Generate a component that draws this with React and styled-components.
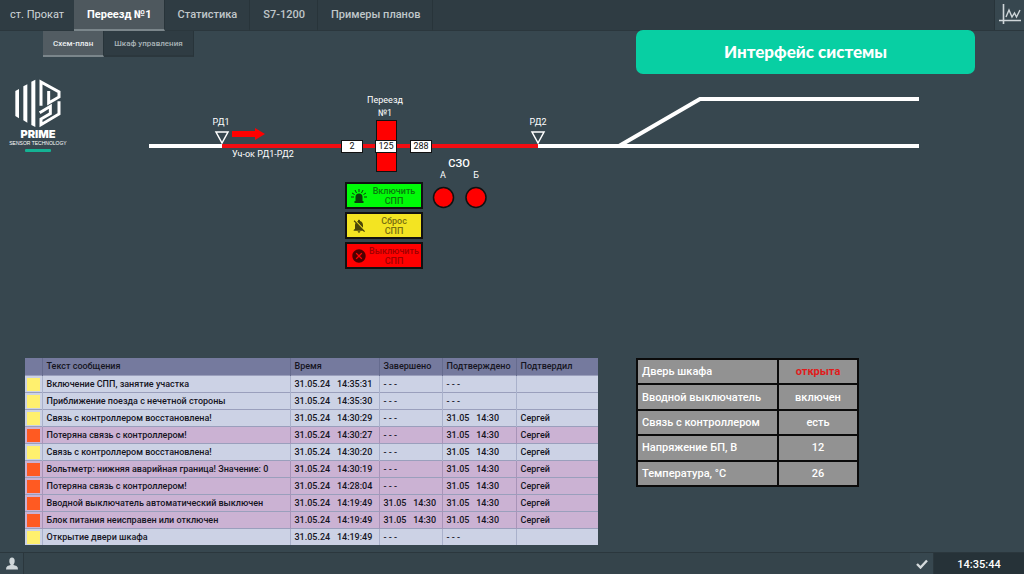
import styled, { createGlobalStyle } from "styled-components";
import { MdNotificationsOff, MdCancel } from "react-icons/md";

const GlobalStyle = createGlobalStyle`
  * {
    box-sizing: border-box;
  }

  body {
    margin: 0;
    background-color: #37474f;
    color: #fff;
    font-family: Roboto, sans-serif;
    font-size: 10px;
  }

  button {
    font-family: inherit;
    border: none;
    padding: 0;
    cursor: pointer;
  }
`;

const Page = styled.div`
  min-height: 100vh;
  display: flex;
  flex-direction: column;
`;

const TopBar = styled.header`
  display: flex;
  height: 31px;
  background-color: #2f3c43;
  border-bottom: 1px solid #2b373d;
`;

const Nav = styled.nav`
  display: flex;
  flex: 1;
`;

const Station = styled.div`
  width: 74px;
  padding-left: 10px;
  line-height: 29px;
  font-size: 11px;
  color: #cfd6d9;
`;

const NavTab = styled.button`
  height: 31px;
  padding: 0 12px 0 13px;
  font-size: 11px;
  font-weight: ${({ $active }) => ($active ? 700 : 500)};
  color: ${({ $active }) => ($active ? "#fff" : "#c0c7ca")};
  background-color: ${({ $active }) => ($active ? "#4e585e" : "transparent")};
  border-right: 1px solid #28343a;
  border-bottom: 2px solid ${({ $active }) => ($active ? "#7b868b" : "transparent")};
`;

const ChartButton = styled.button`
  width: 30px;
  height: 30px;
  background-color: #37474f;
  border-left: 1px solid #28343a;
`;

const SubNav = styled.nav`
  display: flex;
  align-items: flex-start;
  height: 29px;
  padding-left: 43px;
`;

const SubTab = styled.button`
  height: 26px;
  padding: 0 10px;
  font-size: 8px;
  font-weight: 500;
  color: ${({ $active }) => ($active ? "#eceff1" : "#aab4b8")};
  background-color: ${({ $active }) => ($active ? "#525c62" : "#2f3c43")};
  border-right: 1px solid #28343a;
  border-bottom: 2px solid ${({ $active }) => ($active ? "#7b868b" : "#2b373d")};
`;

const Banner = styled.h1`
  position: absolute;
  top: 30px;
  right: 49px;
  width: 339px;
  margin: 0;
  border-radius: 7px;
  background-color: #08cfa3;
  font-family: Lato, "Open Sans", sans-serif;
  font-size: 17px;
  font-weight: 900;
  line-height: 44px;
  text-align: center;
`;

const Workspace = styled.main`
  flex: 1;
`;

const Overview = styled.section`
  display: flex;
`;

const Brand = styled.div`
  width: 80px;
  padding: 19px 4px 0 0;
  display: flex;
  flex-direction: column;
  align-items: center;
`;

const BrandName = styled.div`
  font-family: Inter, sans-serif;
  font-size: 11px;
  font-weight: 900;
  line-height: 12px;
`;

const BrandLine = styled.div`
  font-family: "Liberation Sans", sans-serif;
  font-size: 5px;
  line-height: 7px;
  white-space: nowrap;
`;

const BrandMark = styled.div`
  width: 26px;
  height: 3px;
  margin-top: 2px;
  border-radius: 1px;
  background-color: #14b394;
`;

const Scheme = styled.div`
  position: relative;
  flex: 1;
  height: 298px;
`;

const Tracks = styled.svg`
  display: block;
`;

const Label = styled.div`
  position: absolute;
  left: ${({ $x }) => $x}px;
  top: ${({ $y }) => $y}px;
  transform: ${({ $left }) => ($left ? "none" : "translateX(-50%)")};
  font-size: ${({ $size }) => $size || 9}px;
  font-weight: ${({ $bold }) => ($bold ? 500 : 400)};
  line-height: 13px;
  text-align: center;
  white-space: nowrap;
`;

const Counter = styled.output`
  position: absolute;
  left: ${({ $x }) => $x}px;
  top: 80px;
  width: 22px;
  height: 13px;
  border: 1px solid #111;
  background-color: #fff;
  color: #111;
  font-size: 9px;
  line-height: 11px;
  text-align: center;
`;

const Commands = styled.div`
  position: absolute;
  left: 265px;
  top: 122px;
  width: 78px;
  display: grid;
  gap: 3px;
`;

const CommandButton = styled.button`
  height: 27px;
  padding-left: 4px;
  display: flex;
  align-items: center;
  border: 2px solid #111;
  background-color: ${({ $color }) => $color};
  color: ${({ $text }) => $text};
  font-size: 9px;
  font-weight: 500;
  line-height: 10px;

  svg {
    flex: none;
    color: ${({ $icon }) => $icon};
  }

  span {
    flex: 1;
    min-width: 0;
    text-align: center;
  }
`;

const Panels = styled.section`
  display: grid;
  grid-template-columns: 1fr 223px;
  align-items: start;
  gap: 38px;
  padding: 0 165px 0 25px;
`;

const MessageTable = styled.table`
  width: 100%;
  border-collapse: collapse;
  font-size: 9px;
  color: #15151f;

  th {
    height: 17px;
    padding: 0 0 0 4px;
    background-color: #757a9e;
    border-left: 1px solid #656b8e;
    font-weight: 500;
    text-align: left;
    white-space: nowrap;
  }

  th:first-child {
    border-left: none;
  }
`;

const MessageRow = styled.tr`
  background-color: ${({ $alarm }) => ($alarm ? "#cbb2d3" : "#ccd2e5")};

  td {
    height: 17px;
    padding: 0 0 0 4px;
    border-left: 1px solid ${({ $alarm }) => ($alarm ? "#a894b8" : "#a9b1cb")};
    border-top: 1px solid #9a9fbc;
    font-weight: 500;
    white-space: pre;
  }

  td:first-child {
    padding: 1px 0 0 2px;
    border-left: none;
  }
`;

const Marker = styled.div`
  width: 13px;
  height: 13px;
  background-color: ${({ $alarm }) => ($alarm ? "#ff5a22" : "#fff06e")};
`;

const StatusTable = styled.table`
  width: 100%;
  height: 129px;
  border-spacing: 2px;
  background-color: #0b0b0b;
  font-size: 11px;

  th,
  td {
    padding: 0;
    background-color: #929292;
    font-weight: 500;
  }

  th {
    width: 139px;
    padding-left: 4px;
    text-align: left;
  }

  td {
    text-align: center;
  }
`;

const StatusValue = styled.td`
  color: ${({ $alarm }) => ($alarm ? "#e01b1b" : "#fff")};

  && {
    font-weight: ${({ $alarm }) => ($alarm ? 700 : 500)};
  }
`;

const Footer = styled.footer`
  display: flex;
  justify-content: space-between;
  height: 22px;
  border-top: 1px solid #2b373d;
  background-color: #35444b;
`;

const FooterGroup = styled.div`
  display: flex;
`;

const FooterButton = styled.button`
  width: 24px;
  display: grid;
  place-items: center;
  background-color: #37474f;
  border-right: 1px solid #2b373d;
`;

const Clock = styled.time`
  width: 90px;
  background-color: #263238;
  font-size: 11px;
  font-weight: 500;
  line-height: 23px;
  text-align: center;
`;

const tabs = ["Переезд №1", "Статистика", "S7-1200", "Примеры планов"];
const subTabs = ["Схем-план", "Шкаф управления"];

const messages = [
  { text: "Включение СПП, занятие участка", time: "14:35:31" },
  { text: "Приближение поезда с нечетной стороны", time: "14:35:30" },
  { text: "Связь с контроллером восстановлена!", time: "14:30:29", ack: true },
  { text: "Потеряна связь с контроллером!", time: "14:30:27", ack: true, alarm: true },
  { text: "Связь с контроллером восстановлена!", time: "14:30:20", ack: true },
  { text: "Вольтметр: нижняя аварийная граница! Значение: 0", time: "14:30:19", ack: true, alarm: true },
  { text: "Потеряна связь с контроллером!", time: "14:28:04", ack: true, alarm: true },
  { text: "Вводной выключатель автоматический выключен", time: "14:19:49", done: true, ack: true, alarm: true },
  { text: "Блок питания неисправен или отключен", time: "14:19:49", done: true, ack: true, alarm: true },
  { text: "Открытие двери шкафа", time: "14:19:49" },
];

const statuses = [
  { name: "Дверь шкафа", value: "открыта", alarm: true },
  { name: "Вводной выключатель", value: "включен" },
  { name: "Связь с контроллером", value: "есть" },
  { name: "Напряжение БП, В", value: "12" },
  { name: "Температура, °C", value: "26" },
];

const ChartIcon = () => (
  <svg width="24" height="24" viewBox="0 0 24 24" fill="none" stroke="#cfd6d9">
    <path d="M5.500 2v20M1 18.500h22" strokeWidth="1.600" />
    <path d="M8 15l3-7 3 7 2.500-4 2 4 3.500-7" strokeWidth="1.400" />
  </svg>
);

const LogoIcon = () => (
  <svg width="48" height="49" viewBox="43 42 144 147" fill="#fff">
    <path d="M47 78l11-6v88l-11-7zM71 64l12-6v115l-12-7zM95 50l12-6v142l-12-6z" />
    <path
      d="M124 122V51l54 30v15l-31 18V78M178 109v38l-54 32v-17l28-16v-22l-32 19"
      fill="none"
      stroke="#fff"
      strokeWidth="9"
    />
  </svg>
);

const SirenIcon = () => (
  <svg width="16" height="16" viewBox="0 0 16 16" fill="currentColor">
    <path d="M4.500 13V9a3.500 3.500 0 0 1 7 0v4zM3.500 13h9v2h-9z" />
    <path
      d="M8 1v3M4 2l1.500 3M12 2l-1.500 3M1 5l2.500 1.500M15 5l-2.500 1.500M0 9h3M16 9h-3"
      stroke="currentColor"
      strokeWidth="1"
    />
  </svg>
);

const PersonIcon = () => (
  <svg width="12" height="13" viewBox="0 0 12 13" fill="#cfd6d9">
    <ellipse cx="6" cy="4" rx="2.700" ry="3.500" />
    <path d="M4.500 6h3v2l3 1q1.500.6 1.500 3.500H0Q0 9.600 1.500 9l3-1z" />
  </svg>
);

const CheckIcon = () => (
  <svg width="12" height="10" viewBox="0 0 12 10" fill="none" stroke="#d5dbdd" strokeWidth="2.400">
    <path d="M1 5l3.500 3.500L11 1.500" />
  </svg>
);

const TrackPlan = () => (
  <Tracks width="860" height="200" viewBox="0 0 860 200" fill="none" aria-hidden="true">
    <path d="M69 86h73M458 86h381M539 86l81-47h219" stroke="#fff" strokeWidth="4" />
    <path d="M142 86h316" stroke="#f20d12" strokeWidth="4" />
    <path d="M152 71h23v-3l10 6-10 6v-3h-23z" fill="#f00" />
    <path d="M136 72h12l-6 11zM452 72h12l-6 11z" stroke="#fff" strokeWidth="1.500" />
    <rect x="296.500" y="60.500" width="20" height="51" fill="#f00" stroke="#111" />
    <circle cx="363.500" cy="137.500" r="10" fill="#f00" stroke="#111" strokeWidth="1.500" />
    <circle cx="396" cy="137.500" r="10" fill="#f00" stroke="#111" strokeWidth="1.500" />
  </Tracks>
);

const Message = ({ message }) => {
  const { text, time, done, ack, alarm } = message;
  return (
    <MessageRow $alarm={alarm}>
      <td>
        <Marker $alarm={alarm} />
      </td>
      <td>{text}</td>
      <td>{`31.05.24   ${time}`}</td>
      <td>{done ? "31.05   14:30" : "- - -"}</td>
      <td>{ack ? "31.05   14:30" : "- - -"}</td>
      <td>{ack ? "Сергей" : ""}</td>
    </MessageRow>
  );
};

const App = () => {
  return (
    <Page>
      <GlobalStyle />
      <TopBar>
        <Nav>
          <Station>ст. Прокат</Station>
          {tabs.map((tab, i) => (
            <NavTab key={tab} $active={i === 0}>
              {tab}
            </NavTab>
          ))}
        </Nav>
        <ChartButton aria-label="Графики">
          <ChartIcon />
        </ChartButton>
      </TopBar>
      <SubNav>
        {subTabs.map((tab, i) => (
          <SubTab key={tab} $active={i === 0}>
            {tab}
          </SubTab>
        ))}
      </SubNav>
      <Banner>Интерфейс системы</Banner>

      <Workspace>
        <Overview>
          <Brand>
            <LogoIcon />
            <BrandName>PRIME</BrandName>
            <BrandLine>SENSOR TECHNOLOGY</BrandLine>
            <BrandMark />
          </Brand>
          <Scheme>
            <TrackPlan />
            <Label $x={141} $y={56}>РД1</Label>
            <Label $x={458} $y={56}>РД2</Label>
            <Label $x={305} $y={34}>
              Переезд
              <br />
              №1
            </Label>
            <Label $x={152} $y={88} $left>Уч-ок РД1-РД2</Label>
            <Label $x={379} $y={97} $size={11} $bold>СЗО</Label>
            <Label $x={363} $y={109}>А</Label>
            <Label $x={396} $y={109}>Б</Label>
            <Counter $x={261}>2</Counter>
            <Counter $x={295}>125</Counter>
            <Counter $x={330}>288</Counter>
            <Commands>
              <CommandButton $color="#00fb08" $text="#0a7a0c" $icon="#0b3d0c">
                <SirenIcon />
                <span>Включить<br />СПП</span>
              </CommandButton>
              <CommandButton $color="#f3e422" $text="#786f10" $icon="#4a4408">
                <MdNotificationsOff size={16} />
                <span>Сброс<br />СПП</span>
              </CommandButton>
              <CommandButton $color="#ff0000" $text="#a00000" $icon="#4d0000">
                <MdCancel size={16} />
                <span>Выключить<br />СПП</span>
              </CommandButton>
            </Commands>
          </Scheme>
        </Overview>

        <Panels>
          <MessageTable>
            <colgroup>
              <col style={{ width: 17 }} />
              <col />
              <col style={{ width: 89 }} />
              <col style={{ width: 63 }} />
              <col style={{ width: 74 }} />
              <col style={{ width: 82 }} />
            </colgroup>
            <thead>
              <tr>
                <th aria-label="Тип" />
                <th>Текст сообщения</th>
                <th>Время</th>
                <th>Завершено</th>
                <th>Подтверждено</th>
                <th>Подтвердил</th>
              </tr>
            </thead>
            <tbody>
              {messages.map((message, i) => (
                <Message key={i} message={message} />
              ))}
            </tbody>
          </MessageTable>

          <StatusTable>
            <tbody>
              {statuses.map(({ name, value, alarm }) => (
                <tr key={name}>
                  <th scope="row">{name}</th>
                  <StatusValue $alarm={alarm}>{value}</StatusValue>
                </tr>
              ))}
            </tbody>
          </StatusTable>
        </Panels>
      </Workspace>

      <Footer>
        <FooterButton aria-label="Пользователь">
          <PersonIcon />
        </FooterButton>
        <FooterGroup>
          <FooterButton aria-label="Квитировать">
            <CheckIcon />
          </FooterButton>
          <Clock>14:35:44</Clock>
        </FooterGroup>
      </Footer>
    </Page>
  );
};

export default App;
